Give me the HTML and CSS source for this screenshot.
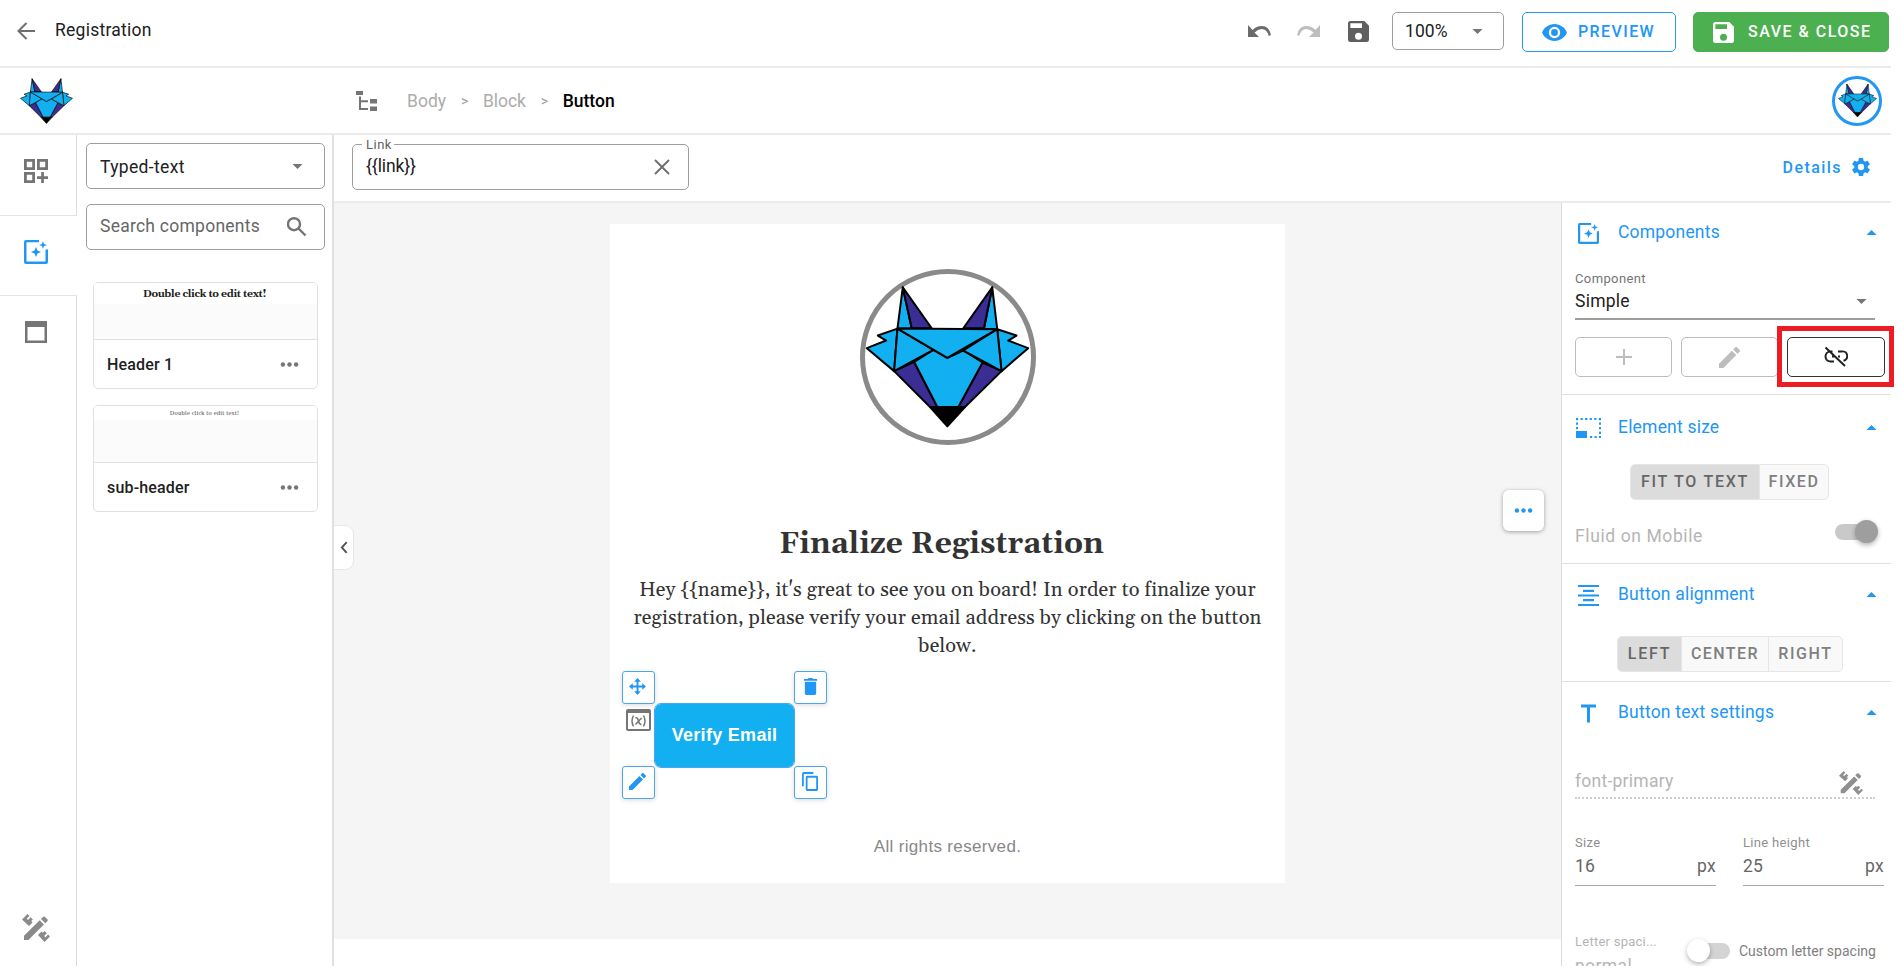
FILE: index.html
```html
<!DOCTYPE html>
<html lang="en">
<head>
<meta charset="utf-8">
<title>Registration</title>
<link rel="stylesheet" href="styles.css">
</head>
<body>
<svg class="defs" width="0" height="0">
  <symbol id="fox" viewBox="75 105 495 430">
    <g stroke="#000" stroke-width="6" stroke-linejoin="round">
      <path fill="#12b0f0" d="M188 112 172 236H215ZM457 112 472 238H432Z"/>
      <path fill="#3a2d94" d="M188 112 215 235H275ZM457 112 432 235H370Z"/>
      <path fill="#12b0f0" d="M172 236 113 257 138 272 80 295 162 364ZM472 238 530 257 505 272 565 295 485 364Z"/>
      <path fill="#3a2d94" d="M162 364 222 336 292 472H270ZM485 364 428 338 355 472H375Z"/>
      <path fill="#12b0f0" d="M222 336 280 300 322 324 370 302 428 338 355 472H292Z"/>
      <path fill="#12b0f0" d="M172 236 280 300 162 364ZM472 238 370 302 485 364Z"/>
      <path fill="#12b0f0" d="M172 236 472 238 322 324Z"/>
      <path fill="#000" d="M270 472H375L322 530Z"/>
    </g>
  </symbol>
  <symbol id="save" viewBox="3 3 18 18"><path d="M15 9H5V5h10m-3 14a3 3 0 0 1-3-3 3 3 0 0 1 3-3 3 3 0 0 1 3 3 3 3 0 0 1-3 3m5-16H5c-1.110 0-2 .9-2 2v14a2 2 0 0 0 2 2h14a2 2 0 0 0 2-2V7l-4-4z"/></symbol>
  <symbol id="down" viewBox="0 0 10 5"><path d="M0 0h10L5 5z"/></symbol>
  <symbol id="up" viewBox="0 0 10 5"><path d="M0 5h10L5 0z"/></symbol>
  <symbol id="pencil" viewBox="3 3 18 18"><path d="M20.710 7.040c.39-.39.39-1.040 0-1.410l-2.340-2.340c-.37-.39-1.020-.39-1.410 0l-1.840 1.830 3.750 3.750M3 17.250V21h3.750L17.810 9.930l-3.750-3.750L3 17.250z"/></symbol>
  <symbol id="dots" viewBox="0 0 18 5"><circle cx="2.4" cy="2.5" r="2.2"/><circle cx="9" cy="2.5" r="2.2"/><circle cx="15.6" cy="2.5" r="2.2"/></symbol>
  <symbol id="sparkbox" viewBox="0 0 24 24"><path d="M15 0v2.200H2.500v19.300h19V9.500H24V22a2 2 0 0 1-2 2H2a2 2 0 0 1-2-2V2a2 2 0 0 1 2-2z"/><path d="m12 7 1.500 3.500L17 12l-3.500 1.500L12 17l-1.500-3.500L7 12l3.500-1.500zM19 1l1 3 3 1-3 1-1 3-1-3-3-1 3-1z"/></symbol>
  <symbol id="design" viewBox="0 0 28 28"><path d="M2 21.800 17.700 6.300 21.900 10.500 6.400 26H2zM19 5l2-2q1-1 2 0l2.300 2.300q1 1 0 2L23.300 9.300zM0 5.500 5.500 0 7.400 1.900 4.700 4.600 6 5.900 8.700 3.200 10.900 5.400 9.200 7.100 10.500 8.400 7 12zM22.500 28l5.500-5.500-1.900-1.900-2.700 2.700-1.300-1.300 2.700-2.700-2.200-2.200-1.700 1.700-1.300-1.300L16 21z"/></symbol>
</svg>

<div class="app">
  <header class="topbar">
    <svg class="back" viewBox="0 0 18 18"><path d="M18 9H2M9.500 1 1.500 9l8 8" fill="none" stroke="#6f6f6f" stroke-width="2"/></svg>
    <h1 class="title">Registration</h1>
    <svg class="undo" viewBox="0 0 23 12"><path d="M0 0v12h11L6.500 7.500Q10 4 13.500 4q5.500 0 7.300 7l2.200-1Q21 .8 13.500 1 8.500 1 4.500 5z"/></svg>
    <svg class="undo redo" viewBox="0 0 23 12"><path d="M0 0v12h11L6.500 7.500Q10 4 13.500 4q5.500 0 7.300 7l2.200-1Q21 .8 13.500 1 8.500 1 4.500 5z"/></svg>
    <svg class="disk"><use href="#save"/></svg>
    <div class="zoom"><span>100%</span><svg class="caret"><use href="#down"/></svg></div>
    <button class="btn preview"><svg class="eye" viewBox="1 4.500 22 15"><path d="M12 9a3 3 0 0 0-3 3 3 3 0 0 0 3 3 3 3 0 0 0 3-3 3 3 0 0 0-3-3m0 8a5 5 0 0 1-5-5 5 5 0 0 1 5-5 5 5 0 0 1 5 5 5 5 0 0 1-5 5m0-12.500C7 4.500 2.730 7.610 1 12c1.730 4.390 6 7.500 11 7.500s9.270-3.110 11-7.500c-1.730-4.390-6-7.500-11-7.500z"/></svg><span>PREVIEW</span></button>
    <button class="btn saveclose"><svg class="disk2"><use href="#save"/></svg><span>SAVE &amp; CLOSE</span></button>
  </header>

  <div class="crumbbar">
    <svg class="logo"><use href="#fox"/></svg>
    <svg class="tree" viewBox="0 0 21 20"><path d="M0 0h7v4H0zM14 8h7v4.500h-7zM14 15.500h7V20h-7zM3 5.500h2v3.800h7v2H5v5.800h7v2H3z"/></svg>
    <nav class="crumbs">
      <span>Body</span><span class="gt">&gt;</span><span class="block">Block</span><span class="gt">&gt;</span><b>Button</b>
    </nav>
    <div class="avatar"><svg><use href="#fox"/></svg></div>
  </div>

  <div class="work">
    <aside class="rail">
      <div class="tab"><svg class="i24" viewBox="0 0 24 24"><path fill-rule="evenodd" d="M0 0h11v11H0zm2.800 2.800v5.400h5.400V2.800zM13 0h11v11H13zm2.800 2.800v5.400h5.400V2.800zM0 13h11v11H0zm2.800 2.800v5.400h5.400v-5.400zM17.200 13h2.700v4.200H24v2.700h-4.100V24h-2.700v-4.100H13v-2.700h4.200z"/></svg></div>
      <div class="tab active"><svg class="i24"><use href="#sparkbox"/></svg></div>
      <div class="tab last"><svg class="i22" viewBox="0 0 22 22"><path fill-rule="evenodd" d="M0 0h22v22H0zM2.500 6v13.500h17V6z"/></svg></div>
      <div class="railend"><svg class="i28"><use href="#design"/></svg></div>
    </aside>

    <aside class="library">
      <div class="field typed"><span>Typed-text</span><svg class="caret"><use href="#down"/></svg></div>
      <div class="field search"><span>Search components</span><svg class="mag" viewBox="0 0 20 20"><path d="M7 1.200a6 6 0 1 1 0 12 6 6 0 0 1 0-12zM11.500 11.500l7 7" fill="none" stroke="#757575" stroke-width="2.400"/></svg></div>
      <div class="card"><div class="thumb"><div class="strip">Double click to edit text!</div></div>
        <div class="cap"><span>Header 1</span><svg class="dots"><use href="#dots"/></svg></div></div>
      <div class="card"><div class="thumb"><div class="strip small">Double click to edit text!</div></div>
        <div class="cap"><span>sub-header</span><svg class="dots"><use href="#dots"/></svg></div></div>
    </aside>

    <div class="main">
      <div class="linkbar">
        <div class="linkfield"><span class="linklabel">Link</span><span class="linkval">{{link}}</span><svg class="x" viewBox="0 0 16 16"><path d="m1 1 14 14M15 1 1 15" fill="none" stroke="#6f6f6f" stroke-width="1.900"/></svg></div>
        <div class="details"><span>Details</span><svg viewBox="2 2 20 20"><path d="M12 15.500A3.500 3.500 0 0 1 8.500 12 3.500 3.500 0 0 1 12 8.500a3.500 3.500 0 0 1 3.500 3.500 3.500 3.500 0 0 1-3.500 3.500m7.430-2.530c.04-.32.07-.64.07-.97s-.03-.66-.07-1l2.110-1.630c.19-.15.240-.42.120-.64l-2-3.460c-.12-.22-.39-.31-.61-.22l-2.490 1c-.52-.39-1.060-.73-1.690-.98l-.37-2.650A.506.506 0 0 0 14 2h-4c-.25 0-.46.18-.5.420l-.37 2.650c-.63.25-1.170.59-1.690.98l-2.490-1c-.22-.09-.49 0-.61.220l-2 3.460c-.13.220-.07.490.120.640L4.570 11c-.04.340-.07.670-.07 1s.03.650.07.970l-2.110 1.660c-.19.150-.25.420-.12.640l2 3.460c.120.220.390.300.610.220l2.490-1.010c.52.400 1.060.740 1.690.990l.37 2.650c.04.240.25.420.5.420h4c.25 0 .46-.18.5-.42l.37-2.650c.63-.26 1.170-.59 1.690-.99l2.490 1.010c.22.080.49 0 .61-.22l2-3.460c.12-.22.070-.49-.12-.64l-2.110-1.660z"/></svg></div>
      </div>
      <div class="lower">
        <div class="canvas">
          <div class="handle"><svg viewBox="0 0 7 12"><path d="M6 1 1.500 6 6 11" fill="none" stroke="#555" stroke-width="1.800"/></svg></div>
          <div class="more"><svg class="dots"><use href="#dots"/></svg></div>
          <article class="mail">
            <div class="badge"><svg><use href="#fox"/></svg></div>
            <h2>Finalize Registration</h2>
            <p>Hey {{name}}, it's great to see you on board! In order to finalize your<br>registration, please verify your email address by clicking on the button<br>below.</p>
            <div class="cta"><span>Verify Email</span>
              <i class="tool tl"><svg viewBox="0 0 18 18"><path d="m9 0 3.500 4H10v4h4V5.500L18 9l-4 3.500V10h-4v4h2.500L9 18l-3.500-4H8v-4H4v2.500L0 9l4-3.500V8h4V4H5.500z"/></svg></i>
              <i class="tool tr"><svg viewBox="-2 0 18 18"><path d="M1 4h12v12.500q0 1.500-1.500 1.500h-9Q1 18 1 16.500zM0 1h4l1-1h4l1 1h4v2H0z"/></svg></i>
              <i class="tool bl"><svg><use href="#pencil"/></svg></i>
              <i class="tool br"><svg viewBox="0 0 17 20"><path fill-rule="evenodd" d="M0 2q0-2 2-2h10v1.900H1.900V15H0zM4 5.500Q4 4 5.500 4h10Q17 4 17 5.500v13q0 1.500-1.500 1.500h-10Q4 20 4 18.500zm1.900.4v12.200h9.200V5.900z"/></svg></i>
              <i class="var"><svg viewBox="0 0 25 22"><path fill-rule="evenodd" d="M2 0h21q2 0 2 2v18q0 2-2 2H2q-2 0-2-2V2q0-2 2-2m0 4v16h21V4z"/><path d="M7.500 6.500Q4.500 12 7.500 17.500M17.500 6.500Q20.500 12 17.500 17.500M9.500 9Q11.500 8 12.500 12T15.500 15.500M15.500 9 9.500 15.500" fill="none" stroke="#757575" stroke-width="1.500"/></svg></i>
            </div>
            <footer>All rights reserved.</footer>
          </article>
        </div>

        <aside class="props">
          <section class="s1">
            <div class="head"><svg class="hi"><use href="#sparkbox"/></svg><span>Components</span><svg class="caret"><use href="#up"/></svg></div>
            <div class="lab">Component</div>
            <div class="sel"><span>Simple</span><svg class="caret"><use href="#down"/></svg></div>
            <div class="acts">
              <button><svg viewBox="0 0 16 16"><path d="M7 0h2v7h7v2H9v7H7V9H0V7h7z"/></svg></button>
              <button><svg class="pen"><use href="#pencil"/></svg></button>
              <button class="on"><svg class="unlink" viewBox="0 0 24 22"><path d="M8.500 5.500H6.500a4.700 4.700 0 0 0 0 10H10M14 5.500h3.500a4.700 4.700 0 0 1 2 9.300M8 10.500h3.500M14 10.500h2M1.500 1.500 21 20" fill="none" stroke="#212121" stroke-width="2"/></svg></button>
            </div>
          </section>
          <section class="s2">
            <div class="head"><svg class="hi size" viewBox="0 0 25 20"><path d="M0 13h11v7H0z"/><path d="M0 1h25M24 0v20M14 19h11M1 0v12" fill="none" stroke="#2196f3" stroke-width="2" stroke-dasharray="2.200 2.360"/></svg><span>Element size</span><svg class="caret"><use href="#up"/></svg></div>
            <div class="group g1"><span class="cur">FIT TO TEXT</span><span>FIXED</span></div>
            <div class="fluid"><span>Fluid on Mobile</span><i class="switch right"></i></div>
          </section>
          <section class="s3">
            <div class="head"><svg class="hi" viewBox="0 0 21 21"><path d="M0 0h21v2H0zM5 4.700h11v2.200H5zM0 9.500h21v2H0zM5 14.100h11v2.200H5zM0 19h21v2H0z"/></svg><span>Button alignment</span><svg class="caret"><use href="#up"/></svg></div>
            <div class="group g2"><span class="cur">LEFT</span><span class="mid">CENTER</span><span>RIGHT</span></div>
          </section>
          <section class="s4">
            <div class="head"><svg class="hi" viewBox="0 0 21 21"><path d="M3 1.500h15v3h-6v15H9v-15H3z"/></svg><span>Button text settings</span><svg class="caret"><use href="#up"/></svg></div>
            <div class="fontrow"><span>font-primary</span><svg><use href="#design"/></svg></div>
            <div class="nums">
              <div><label>Size</label><p><span>16</span><span>px</span></p></div>
              <div><label>Line height</label><p><span>25</span><span>px</span></p></div>
            </div>
            <div class="spacing"><div class="ls"><label>Letter spaci...</label><span>normal</span></div><i class="switch left"></i><span class="custom">Custom letter spacing</span></div>
          </section>
        </aside>
      </div>
    </div>
  </div>
</div>
<div class="callout"></div>
</body>
</html>
```
FILE: styles.css
```css
* { box-sizing: border-box; margin: 0; padding: 0; }
body { background: #fff; font-family: Roboto, sans-serif; font-size: 17.5px; letter-spacing: .25px; color: #212121; overflow: hidden; }
svg { display: block; flex: none; fill: #757575; }
button { font-family: inherit; background: #fff; }
i { font-style: normal; }
.defs { position: absolute; }
.app { width: 1891px; height: 966px; overflow: hidden; display: flex; flex-direction: column; white-space: nowrap; }
.caret { width: 11px; height: 5px; }

.topbar { flex: none; height: 68px; border-bottom: 2px solid #ebebeb; display: flex; align-items: flex-start; padding: 12px 2px 0 17px; }
.back { width: 18px; height: 18px; margin-top: 10px; }
.title { font-size: 17.5px; font-weight: 400; line-height: 37px; margin-left: 20px; margin-right: auto; }
.undo { width: 23px; height: 12px; margin-top: 13px; margin-right: 26px; fill: #6b6b6b; }
.redo { transform: scaleX(-1); fill: #bdbdbd; margin-right: 28px; }
.disk { width: 21px; height: 21px; margin-top: 9px; margin-right: 23px; fill: #5f5f5f; }
.zoom { width: 112px; height: 38px; border: 1px solid #9e9e9e; border-radius: 5px; display: flex; align-items: center; justify-content: space-between; padding: 0 20px 0 12px; margin-right: 18px; letter-spacing: .1px; }
.btn { height: 40px; border-radius: 5px; display: flex; align-items: center; font-size: 16px; font-weight: 500; border: 1px solid #2196f3; color: #2196f3; letter-spacing: 1.5px; }
.btn span { margin-top: -2px; }
.preview { width: 154px; padding-left: 19px; margin-right: 17px; letter-spacing: 1.4px; }
.eye { width: 25px; height: 17px; fill: #2196f3; margin-right: 11px; }
.saveclose { width: 196px; padding-left: 19px; background: #4caf50; border-color: #4caf50; color: #fff; }
.disk2 { width: 21px; height: 21px; fill: #fff; margin-right: 14px; }

.crumbbar { flex: none; height: 67px; border-bottom: 2px solid #ebebeb; display: flex; align-items: center; padding: 0 9px 0 20px; }
.logo { width: 53px; height: 48px; margin-right: 283px; }
.tree { width: 21px; height: 20px; margin-right: 30px; }
.crumbs { display: flex; align-items: center; color: #acacac; margin-right: auto; letter-spacing: 0; }
.crumbs .gt { color: #9e9e9e; font-size: 14px; width: 8px; margin: 0 14px 0 15px; }
.crumbs .block { letter-spacing: -.1px; }
.crumbs b { font-weight: 500; color: #000; }
.avatar { width: 50px; height: 50px; border-radius: 50%; border: 3px solid #2196f3; display: flex; justify-content: center; padding-top: 4px; }
.avatar svg { width: 39px; height: 35px; }

.work { flex: 1; display: flex; min-height: 0; }
.rail { width: 77px; display: flex; flex-direction: column; }
.tab { height: 81px; display: flex; align-items: center; padding-left: 24px; padding-bottom: 9px; border-right: 1px solid #dcdcdc; border-bottom: 1px solid #e4e4e4; }
.tab.active { height: 80px; border-right: 0; padding-bottom: 8px; }
.tab.active svg { fill: #2196f3; }
.tab.last { border-bottom: 0; height: 74px; padding: 0 0 3px 25px; }
.i24 { width: 24px; height: 24px; }
.i22 { width: 22px; height: 22px; }
.i28 { width: 28px; height: 28px; fill: #8a8a8a; }
.railend { flex: 1; border-right: 1px solid #dcdcdc; display: flex; align-items: flex-end; padding: 0 0 24px 22px; }
.library { width: 257px; border-right: 2px solid #e0e0e0; padding: 8px 7px 0 9px; display: flex; flex-direction: column; }
.field { height: 46px; border: 1px solid #9e9e9e; border-radius: 5px; display: flex; align-items: center; justify-content: space-between; padding: 0 21px 0 13px; margin-bottom: 15px; }
.typed span { margin-top: 2px; letter-spacing: .35px; }
.search { color: #666; padding-right: 17px; margin-bottom: 32px; }
.search span { margin-top: -3px; }
.mag { width: 20px; height: 20px; }
.card { margin: 0 7px 16px 7px; height: 107px; border: 1px solid #e0e0e0; border-radius: 5px; overflow: hidden; }
.thumb { height: 57px; background: #fbfbfb; border-bottom: 1px solid #e0e0e0; }
.strip { height: 21px; background: #fff; text-align: center; padding-right: 2px; font: 700 10.5px/23px Georgia, Gelasio, "Liberation Serif", serif; letter-spacing: -.3px; }
.strip.small { height: 14px; font-size: 6px; line-height: 15px; font-weight: 400; letter-spacing: .18px; color: #555; }
.cap { height: 49px; display: flex; align-items: center; justify-content: space-between; padding: 0 18px 0 13px; font-size: 16px; font-weight: 500; letter-spacing: .17px; }
.dots { width: 19px; height: 5px; }

.main { flex: 1; display: flex; flex-direction: column; min-width: 0; }
.linkbar { flex: none; height: 68px; border-bottom: 2px solid #ebebeb; display: flex; justify-content: space-between; align-items: flex-start; padding: 9px 21px 0 18px; }
.linkfield { position: relative; width: 337px; height: 46px; border: 1px solid #9e9e9e; border-radius: 5px; display: flex; align-items: center; justify-content: space-between; padding: 0 18px 0 13px; }
.linklabel { position: absolute; top: -9px; left: 9px; padding: 0 2px 0 4px; line-height: 18px; background: #fff; font-size: 13px; letter-spacing: .5px; color: #616161; }
.linkval { margin-top: -2px; letter-spacing: -.1px; }
.x { width: 16px; height: 16px; }
.details { display: flex; align-items: center; height: 46px; color: #2196f3; font-size: 16px; font-weight: 500; letter-spacing: 1.45px; }
.details svg { width: 18px; height: 18px; fill: #2196f3; margin-left: 10px; }
.lower { flex: 1; display: flex; min-height: 0; }
.canvas { position: relative; flex: 1; height: 736px; background: #f5f5f5; padding: 21px 0 0 276px; }
.handle { position: absolute; left: 0; top: 322px; width: 20px; height: 45px; border: 1px solid #e6e6e6; border-left: 0; border-radius: 0 9px 9px 0; background: #fff; display: flex; align-items: center; justify-content: center; }
.handle svg { width: 8px; height: 13px; }
.more { position: absolute; left: 1169px; top: 287px; width: 41px; height: 41px; border-radius: 6px; background: #fff; box-shadow: 0 1px 4px rgba(0,0,0,.35); display: flex; align-items: center; justify-content: center; }
.more svg { fill: #2196f3; }

.mail { width: 675px; height: 659px; background: #fff; padding-top: 45px; text-align: center; }
.badge { width: 176px; height: 176px; margin: 0 auto; border: 5px solid #8a8a8a; border-radius: 50%; display: flex; justify-content: center; padding-top: 11px; }
.badge svg { width: 165px; height: 143px; }
.mail h2 { margin-top: 79px; padding-right: 12px; font: 700 30px/40px Georgia, Gelasio, "Liberation Serif", serif; letter-spacing: .09px; color: #333; }
.mail p { margin-top: 12px; font: 400 20px/28px Georgia, Gelasio, "Liberation Serif", serif; letter-spacing: .13px; color: #333; }
.cta { position: relative; width: 139px; height: 63px; margin: 44px 0 0 45px; background: #12b0f0; border-radius: 6px; outline: 1px solid #4ba6f0; color: #fff; font: 700 18px/63px "Liberation Sans", sans-serif; letter-spacing: .3px; }
.tool { position: absolute; width: 33px; height: 33px; border: 1px solid #4ba6f0; border-radius: 3px; background: #fff; box-shadow: 0 1px 5px rgba(0,0,0,.15); display: flex; align-items: center; justify-content: center; padding: 0 3px 3px 0; }
.tool svg { fill: #2196f3; width: 17px; height: 17px; }
.tl { left: -33px; top: -33px; }
.tr { left: 139px; top: -33px; }
.bl { left: -33px; top: 62px; }
.br { left: 139px; top: 62px; }
.tool.tr { padding-right: 0; }
.tool.br { padding-right: 1px; }
.br svg { width: 16px; height: 19px; }
.var { position: absolute; left: -29px; top: 5px; }
.var svg { width: 25px; height: 22px; }
.mail footer { margin-top: 68px; font: 400 17px/24px "Liberation Sans", sans-serif; letter-spacing: .34px; color: #888; }

.props { width: 330px; border-left: 1px solid #dcdcdc; overflow: hidden; }
.props section { border-bottom: 1px solid #e0e0e0; padding: 0 14px 0 13px; }
.head { display: flex; align-items: center; color: #2196f3; height: 30px; letter-spacing: .2px; }
.head .hi { width: 21px; height: 21px; margin: 2px 19px 0 3px; }
.head .size { width: 25px; height: 20px; margin: 2px 17px 0 1px; }
.head svg { fill: #2196f3; }
.head .caret { margin-left: auto; }
.props .s1 { height: 192px; padding-top: 14px; }
.lab { margin-top: 22px; font-size: 13px; line-height: 20px; letter-spacing: .38px; color: #757575; }
.sel { display: flex; align-items: center; justify-content: space-between; height: 31px; margin-right: 2px; padding: 0 8px 5px 0; border-bottom: 2px solid #9e9e9e; }
.acts { display: flex; gap: 9px; margin-top: 17px; }
.acts button { width: 97px; height: 40px; border: 1px solid #bdbdbd; border-radius: 5px; display: flex; align-items: center; justify-content: center; flex: none; }
.acts svg { width: 16px; height: 16px; fill: #bdbdbd; }
.acts .pen { width: 21px; height: 21px; }
.acts .on { width: 98px; border-color: #333; }
.acts .unlink { width: 24px; height: 22px; }
.props .s2 { height: 169px; padding-top: 17px; }
.group { display: flex; height: 36px; border: 1px solid #e6e6e6; border-radius: 5px; overflow: hidden; background: #f9f9f9; font-size: 16px; font-weight: 500; line-height: 34px; letter-spacing: 1.6px; color: #808080; }
.group > span { flex: 1; text-align: center; border-left: 1px solid #e6e6e6; }
.group > .cur { flex: none; background: #dcdcdc; color: #666; border-left: 0; letter-spacing: 1.75px; }
.group > .mid { flex: none; width: 87px; letter-spacing: 1.45px; }
.g1 { width: 199px; margin: 22px 0 0 55px; }
.g1 > .cur { width: 128px; }
.g2 { width: 226px; margin: 27px 0 0 42px; }
.g2 > .cur { width: 63px; }
.fluid { display: flex; justify-content: space-between; height: 44px; margin-top: 14px; line-height: 44px; letter-spacing: .6px; color: #b5b5b5; }
.switch { position: relative; display: block; flex: none; width: 42px; height: 16px; border-radius: 8px; background: #d4d4d4; }
.switch::after { content: ""; position: absolute; top: -4px; width: 23px; height: 23px; border-radius: 50%; background: #fff; box-shadow: 0 2px 5px rgba(0,0,0,.3); }
.switch.right { background: #c9c9c9; margin-top: 10px; }
.switch.right::after { right: -1px; background: #9e9e9e; }
.switch.left::after { left: -1px; }
.props .s3 { height: 118px; padding-top: 15px; }
.props .s4 { border: 0; padding-top: 15px; }
.fontrow { display: flex; justify-content: space-between; align-items: center; height: 34px; margin: 38px 2px 0 0; padding: 0 12px 0 0; border-bottom: 2px dotted #cfcfcf; color: #b5b5b5; }
.fontrow svg { width: 24px; height: 24px; margin-top: 3px; fill: #8f8f8f; }
.fontrow span { margin-top: -1px; }
.nums { display: flex; gap: 27px; margin: 34px -8px 0 0; }
.nums > div { width: 141px; }
.nums label { display: block; font-size: 13px; line-height: 20px; letter-spacing: .33px; color: #8f8f8f; }
.nums p { display: flex; justify-content: space-between; border-bottom: 1px solid #a8a8a8; height: 33px; line-height: 26px; color: #666; }
.spacing { display: flex; margin-top: 45px; margin-right: -8px; }
.ls { width: 103px; margin-right: 10px; color: #b5b5b5; }
.ls label { display: block; font-size: 13px; line-height: 22px; }
.ls span { line-height: 26px; letter-spacing: .4px; }
.switch.left { margin-top: 12px; }
.custom { font-size: 14px; line-height: 20px; letter-spacing: 0; margin: 10px 0 0 9px; color: #808080; }

.callout { position: absolute; left: 1777px; top: 326px; width: 117px; height: 61px; border: 5px solid #ed1c24; }
```
